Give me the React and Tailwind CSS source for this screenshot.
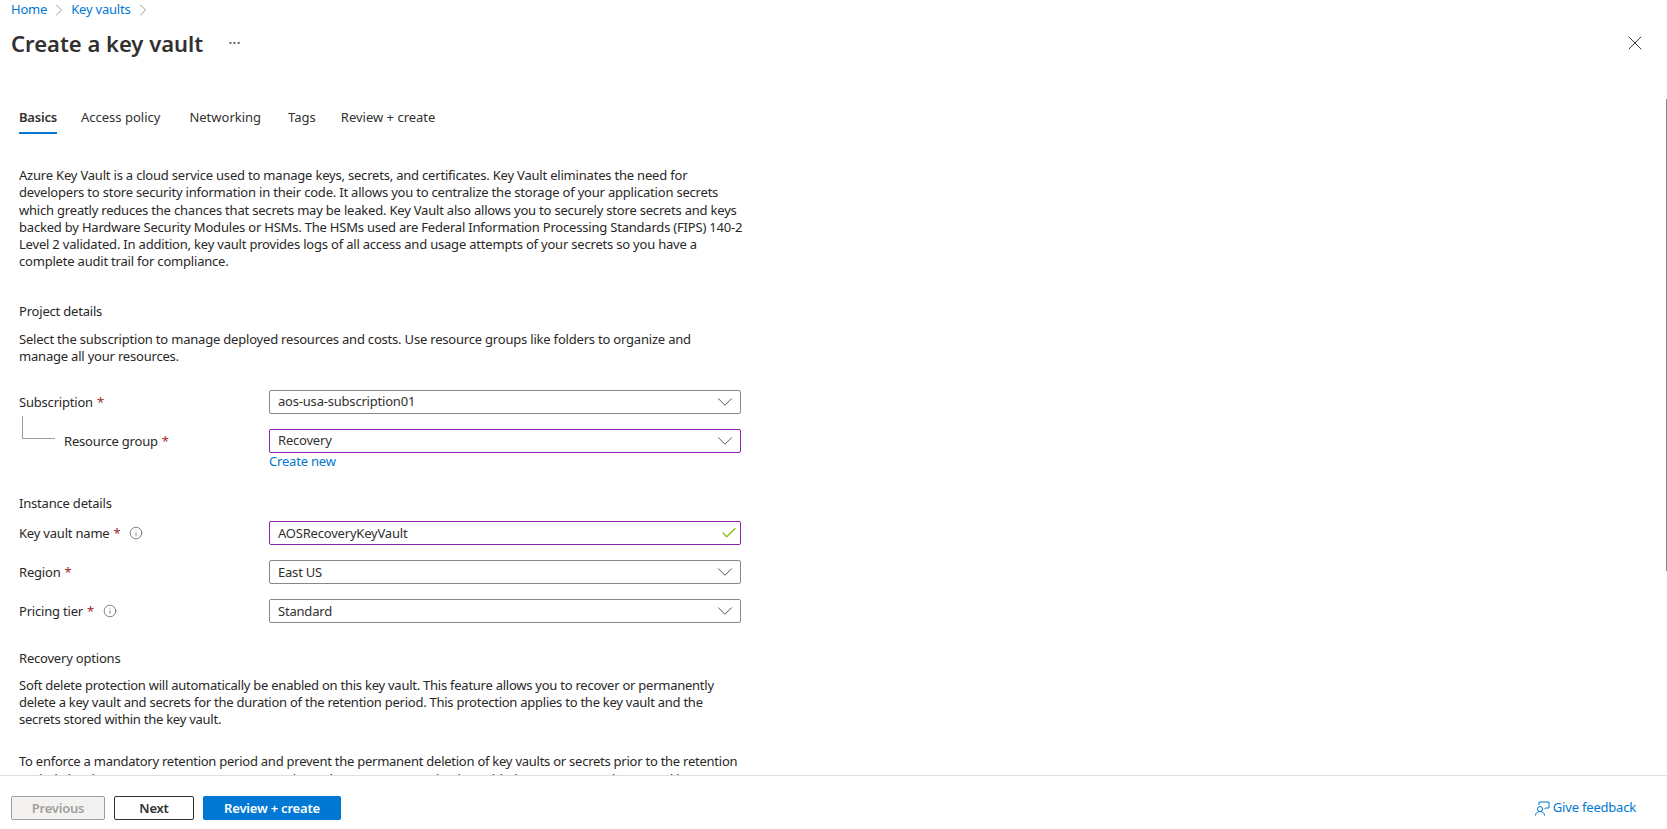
import React from "react";
import { ChevronDown, Check, X, Info, ChevronRight } from "lucide-react";

const Label = ({ children, info, pad }) => (
  <div className={`flex items-center text-[13px] leading-[18px] text-[#292827] ${pad ? "pl-[45px]" : ""}`}>
    <span>{children}</span>
    <span className="ml-[4px] text-[#a4262c]">*</span>
    {info && <Info className="ml-[9px] h-[14px] w-[14px] text-[#605e5c]" strokeWidth={1.3} />}
  </div>
);

const Field = ({ value, focused, check }) => (
  <div className={`flex h-[24px] w-[472px] items-center justify-between rounded-[2px] border pl-[8px] pr-[2px] text-[13px] text-[#323130] ${focused ? "border-[#8e24aa]" : "border-[#8a8886]"}`}>
    <span>{value}</span>
    {check ? (
      <Check className="h-[18px] w-[18px] text-[#7fba00]" strokeWidth={1.5} />
    ) : (
      <ChevronDown className="h-[26px] w-[26px] text-[#505050]" strokeWidth={0.9} />
    )}
  </div>
);

const Tab = ({ children, active, className }) => (
  <div className={`flex h-[34px] flex-col justify-center border-b-2 pt-[4px] text-[13px] text-[#323130] ${active ? "border-[#0078d4] font-semibold tracking-[-0.2px]" : "border-transparent tracking-normal"} ${className}`}>
    {children}
  </div>
);

const FeedbackIcon = () => (
  <svg width="15" height="15" viewBox="0 0 15 15" fill="none" stroke="#0078d4" strokeWidth="1">
    <path d="M4 4V1h10v6H10.500L9 8.500" />
    <circle cx="5" cy="8" r="2.500" />
    <path d="M0.500 14.500c0-2.500 2-4 4.500-4s4.500 1.500 4.500 4" />
  </svg>
);

export default function App() {
  return (
    <div className="flex h-[829px] w-[1667px] flex-col overflow-hidden bg-white font-['Noto_Sans',sans-serif] text-[13px] tracking-[-0.2px] text-[#292827]">
      <div className="flex h-[18px] items-center pl-[11px] pt-[1px] text-[13px] text-[#0078d4]">
        <span>Home</span>
        <ChevronRight className="mx-[2px] h-[20px] w-[20px] text-[#8a8886]" strokeWidth={1} />
        <span>Key vaults</span>
        <ChevronRight className="mx-[2px] h-[20px] w-[20px] text-[#8a8886]" strokeWidth={1} />
      </div>

      <div className="flex h-[50px] items-center justify-between pl-[11px] pr-[20px]">
        <div className="flex items-center">
          <h1 className="text-[22px] font-semibold tracking-normal text-[#323130]">Create a key vault</h1>
          <span className="ml-[25px] text-[16px] text-[#605e5c]">···</span>
        </div>
        <X className="h-[24px] w-[24px] text-[#404040]" strokeWidth={1} />
      </div>

      <div className="relative flex h-[31px] flex-1 flex-col overflow-hidden">
        {/* scrollbar thumb */}
        <div className="absolute right-0 top-[31px] h-[472px] w-[1px] bg-[#8a8886]" />
        <div className="mt-[32px] flex px-[19px]">
          <Tab active>Basics</Tab>
          <Tab className="ml-[24px]">Access policy</Tab>
          <Tab className="ml-[29px]">Networking</Tab>
          <Tab className="ml-[27px]">Tags</Tab>
          <Tab className="ml-[25px]">Review + create</Tab>
        </div>

        <div className="w-[760px] pl-[19px] pt-[33px] leading-[17.3px]">
          <p>
            Azure Key Vault is a cloud service used to manage keys, secrets, and certificates. Key Vault eliminates the need for<br />
            developers to store security information in their code. It allows you to centralize the storage of your application secrets<br />
            which greatly reduces the chances that secrets may be leaked. Key Vault also allows you to securely store secrets and keys<br />
            backed by Hardware Security Modules or HSMs. The HSMs used are Federal Information Processing Standards (FIPS) 140-2<br />
            Level 2 validated. In addition, key vault provides logs of all access and usage attempts of your secrets so you have a<br />
            complete audit trail for compliance.
          </p>

          <h2 className="mt-[32px]">Project details</h2>
          <p className="mt-[11px]">
            Select the subscription to manage deployed resources and costs. Use resource groups like folders to organize and<br />
            manage all your resources.
          </p>

          <div className="mt-[24px] grid grid-cols-[250px_472px] items-center">
            <Label>Subscription</Label>
            <Field value="aos-usa-subscription01" />
          </div>
          <div className="relative mt-[15px] grid grid-cols-[250px_472px] items-center">
            <div className="absolute left-[3px] top-[-13px] h-[23px] w-[33px] border-b border-l border-[#a19f9d]" />
            <Label pad>Resource group</Label>
            <Field value="Recovery" focused />
          </div>
          <a className="ml-[250px] block text-[#0078d4]">Create new</a>

          <h2 className="mt-[25px]">Instance details</h2>
          <div className="mt-[9px] grid grid-cols-[250px_472px] items-center">
            <Label info>Key vault name</Label>
            <Field value="AOSRecoveryKeyVault" focused check />
          </div>
          <div className="mt-[15px] grid grid-cols-[250px_472px] items-center">
            <Label>Region</Label>
            <Field value="East US" />
          </div>
          <div className="mt-[15px] grid grid-cols-[250px_472px] items-center">
            <Label info>Pricing tier</Label>
            <Field value="Standard" />
          </div>

          <h2 className="mt-[27px]">Recovery options</h2>
          <p className="mt-[9px] tracking-[-0.25px]">
            Soft delete protection will automatically be enabled on this key vault. This feature allows you to recover or permanently<br />
            delete a key vault and secrets for the duration of the retention period. This protection applies to the key vault and the<br />
            secrets stored within the key vault.
          </p>
          <p className="mt-[25px] tracking-[-0.25px]">
            To enforce a mandatory retention period and prevent the permanent deletion of key vaults or secrets prior to the retention<br />
            period elapsing, you can turn on purge protection. When purge protection is enabled, secrets cannot be purged by
          </p>
        </div>
      </div>

      <div className="flex h-[54px] items-start justify-between border-t border-[#e1dfdd] bg-white pl-[11px] pr-[31px] pt-[20px]">
        <div className="flex items-center gap-[9px]">
          <button className="h-[24px] w-[94px] rounded-[2px] border border-[#a19f9d] bg-[#f3f2f1] pt-[1px] text-[13px] font-semibold text-[#a19f9d]">Previous</button>
          <button className="h-[24px] w-[80px] rounded-[2px] border border-[#323130] bg-white pt-[1px] text-[13px] font-semibold text-[#323130]">Next</button>
          <button className="h-[24px] w-[138px] rounded-[2px] bg-[#0078d4] pt-[1px] text-[13px] font-semibold text-white">Review + create</button>
        </div>
        <div className="flex h-[24px] items-center gap-[3px] text-[13px] text-[#0078d4]">
          <FeedbackIcon />
          <span>Give feedback</span>
        </div>
      </div>
    </div>
  );
}
